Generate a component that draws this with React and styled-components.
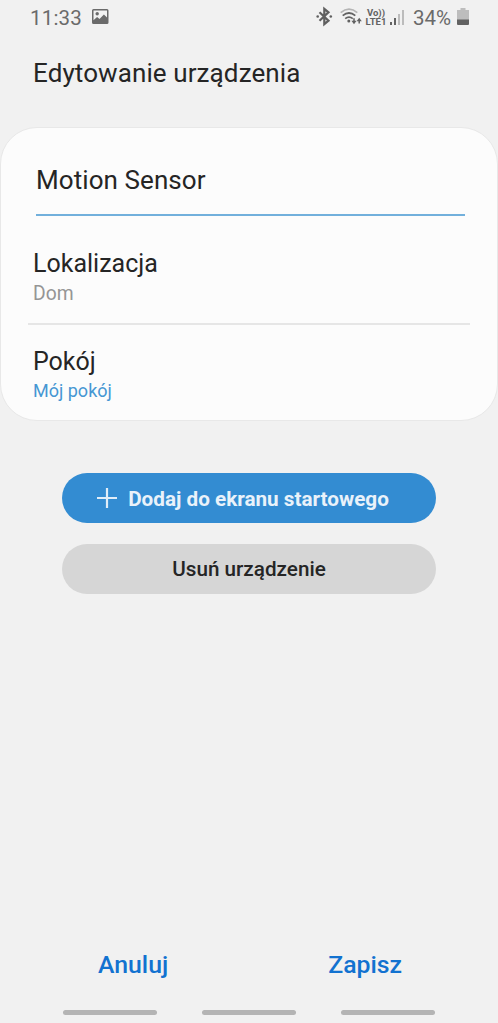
import React, { useState } from "react";
import styled, { createGlobalStyle } from "styled-components";

const GlobalStyle = createGlobalStyle`
  * {
    box-sizing: border-box;
  }

  body {
    margin: 0;
    background: #f1f1f1;
    font-family: Roboto, "Noto Sans", sans-serif;
    color: #252525;
  }
`;

const PageWrapper = styled.div`
  display: flex;
  flex-direction: column;
  width: 498px;
  height: 1023px;
  overflow: hidden;
  background: #f1f1f1;
`;

const StatusBar = styled.header`
  display: flex;
  justify-content: space-between;
  height: 36px;
  padding: 0 29px 0 30px;
  color: #6a6a6a;
`;

const StatusGroup = styled.div`
  display: flex;
  align-items: flex-start;
`;

const StatusText = styled.span`
  width: ${(p) => p.$width}px;
  margin-left: ${(p) => p.$gap || 0}px;
  font-size: 20.5px;
  line-height: 36px;
  letter-spacing: ${(p) => p.$spacing || 0}px;
  white-space: nowrap;
`;

const StatusIcons = styled.svg`
  display: block;
  flex: none;
  margin-left: ${(p) => p.$gap || 0}px;
`;

const NetworkLabel = styled.div`
  display: flex;
  flex-direction: column;
  align-items: center;
  width: 22px;
  margin-left: 3px;
  padding-top: 8px;
  color: #626262;
  font-size: 9.5px;
  font-weight: 700;
  line-height: 9px;
  white-space: nowrap;
`;

const Title = styled.h1`
  margin: 0;
  padding: 19px 33px 0;
  font-size: 26px;
  font-weight: 400;
  line-height: 36px;
  letter-spacing: 0.1px;
`;

const Card = styled.section`
  height: 294px;
  margin-top: 36px;
  padding: 34px 27px 0;
  border: 1px solid #e8e8e8;
  border-radius: 37px;
  background: #fcfcfc;
`;

const NameInput = styled.input`
  display: block;
  width: 429px;
  height: 54px;
  margin: 0 0 0 8px;
  padding: 0 0 16px;
  border: 0;
  border-bottom: 2px solid #72b0dc;
  outline: 0;
  background: transparent;
  color: inherit;
  font: 400 26px/36px Roboto, "Noto Sans", sans-serif;
  letter-spacing: 0.08px;
`;

const Setting = styled.div`
  height: ${(p) => p.$height}px;
  padding: ${(p) => p.$top}px 5px 0;
  border-bottom: ${(p) => (p.$divided ? "2px solid #e6e6e6" : "0")};
`;

const SettingName = styled.div`
  font-size: 25px;
  line-height: 32px;
`;

const SettingValue = styled.div`
  color: ${(p) => (p.$active ? "#4697d3" : "#959595")};
  font-size: ${(p) => (p.$active ? 18 : 19.3)}px;
  line-height: ${(p) => (p.$active ? 25 : 28)}px;
`;

const Actions = styled.div`
  display: flex;
  flex-direction: column;
  align-items: center;
  gap: 21px;
  margin-top: 52px;
`;

const PillButton = styled.button`
  display: flex;
  align-items: center;
  justify-content: center;
  gap: 10px;
  width: 374px;
  height: 50px;
  padding: 2px 12px 0 0;
  border: 0;
  border-radius: 25px;
  background: #338cd2;
  color: #e9f2fa;
  font: 700 20.7px/28px Roboto, "Noto Sans", sans-serif;
`;

const GreyButton = styled(PillButton)`
  padding: 0;
  background: #d6d6d6;
  color: #252525;
  font-weight: 500;
`;

const Footer = styled.footer`
  display: flex;
  justify-content: space-between;
  margin-top: auto;
  padding: 0 96px 0 98px;
`;

const TextButton = styled.button`
  padding: 0;
  border: 0;
  background: transparent;
  color: #1272d0;
  font: 500 24.8px/36px Roboto, "Noto Sans", sans-serif;
`;

const NavigationBar = styled.nav`
  display: flex;
  justify-content: space-between;
  height: 40px;
  padding: 27px 63px 0;
`;

const NavHint = styled.span`
  width: 94px;
  height: 5px;
  border-radius: 3px;
  background: #b4b4b4;
`;

const PictureIcon = () => (
  <StatusIcons $gap={10} width="17" height="36" viewBox="0 0 17 36">
    <path
      fill="#6a6a6a"
      fillRule="evenodd"
      d="M1.5 9H15q1.5 0 1.5 1.5v12q0 1.5-1.5 1.5H1.5Q0 24 0 22.500v-12Q0 9 1.500 9zM1.500 10.500v9.800l3.600-3.300 2.400 2 4.400-4.500 3.100 3v-7z"
    />
    <circle cx="5.200" cy="13.700" r="1.700" fill="#6a6a6a" />
  </StatusIcons>
);

const BluetoothIcon = () => (
  <StatusIcons width="17" height="36" viewBox="0 0 17 36">
    <path
      d="M3.500 12.300L12.500 20.700 8.300 24.200V8.800L12.500 12.300 3.500 20.700"
      fill="none"
      stroke="#5f5f5f"
      strokeWidth="2.200"
    />
    <circle cx="1.700" cy="16.500" r="1.300" fill="#5f5f5f" />
    <circle cx="14.800" cy="16.500" r="1.300" fill="#5f5f5f" />
  </StatusIcons>
);

const WifiIcon = () => (
  <StatusIcons $gap={7} width="22" height="36" viewBox="0 0 22 36">
    <g fill="none" strokeWidth="1.700">
      <path d="M0.700 12.700Q9 5.700 17.300 12.700" stroke="#b5b5b5" />
      <path d="M2.700 15.700Q9 10.300 15.300 15.700" stroke="#626262" />
      <path d="M5.200 18.600Q9 15.600 12.800 18.600" stroke="#626262" />
    </g>
    <circle cx="8.800" cy="21" r="1.500" fill="#626262" />
    <path
      d="M14 18.300v3.300M19.200 20.300v3.300"
      stroke="#626262"
      strokeWidth="1.500"
    />
    <path
      d="M11.400 20.800h5.200L14 24.200zM16.600 21.300h5.200l-2.600-3.500z"
      fill="#626262"
    />
  </StatusIcons>
);

const SignalIcon = () => (
  <StatusIcons $gap={2} width="16" height="36" viewBox="0 0 16 36">
    <path d="M1 22h2v3H1zM5 18h2v7H5z" fill="#626262" />
    <path d="M9 14h2v11H9zM13 10h2v15h-2z" fill="#bcbcbc" />
  </StatusIcons>
);

const BatteryIcon = () => (
  <StatusIcons width="12" height="36" viewBox="0 0 12 36">
    <path d="M3.500 8h5v2H12v10H0V10h3.500z" fill="#bdbdbd" />
    <path d="M0 19.500h12V24q0 1-1 1H1q-1 0-1-1z" fill="#626262" />
  </StatusIcons>
);

const PlusSvg = styled.svg`
  margin: 0 1px 2px 0;
`;

const PlusIcon = () => (
  <PlusSvg width="20" height="20" viewBox="0 0 20 20">
    <path d="M10 0v20M0 10h20" stroke="#e0edf8" strokeWidth="2.200" />
  </PlusSvg>
);

const App = () => {
  const [name, setName] = useState("Motion Sensor");

  return (
    <>
      <GlobalStyle />
      <PageWrapper>
        <StatusBar>
          <StatusGroup>
            <StatusText $width={52} $spacing={0.2}>
              11:33
            </StatusText>
            <PictureIcon />
          </StatusGroup>
          <StatusGroup>
            <BluetoothIcon />
            <WifiIcon />
            <NetworkLabel>
              <span>Vo))</span>
              <span>LTE1</span>
            </NetworkLabel>
            <SignalIcon />
            <StatusText $width={44} $gap={8}>
              34%
            </StatusText>
            <BatteryIcon />
          </StatusGroup>
        </StatusBar>
        <Title>Edytowanie urządzenia</Title>
        <Card>
          <NameInput value={name} onChange={(e) => setName(e.target.value)} />
          <Setting $height={109} $top={32} $divided>
            <SettingName>Lokalizacja</SettingName>
            <SettingValue>Dom</SettingValue>
          </Setting>
          <Setting $height={90} $top={21}>
            <SettingName>Pokój</SettingName>
            <SettingValue $active>Mój pokój</SettingValue>
          </Setting>
        </Card>
        <Actions>
          <PillButton>
            <PlusIcon />
            Dodaj do ekranu startowego
          </PillButton>
          <GreyButton>Usuń urządzenie</GreyButton>
        </Actions>
        <Footer>
          <TextButton>Anuluj</TextButton>
          <TextButton>Zapisz</TextButton>
        </Footer>
        <NavigationBar>
          <NavHint />
          <NavHint />
          <NavHint />
        </NavigationBar>
      </PageWrapper>
    </>
  );
};

export default App;
